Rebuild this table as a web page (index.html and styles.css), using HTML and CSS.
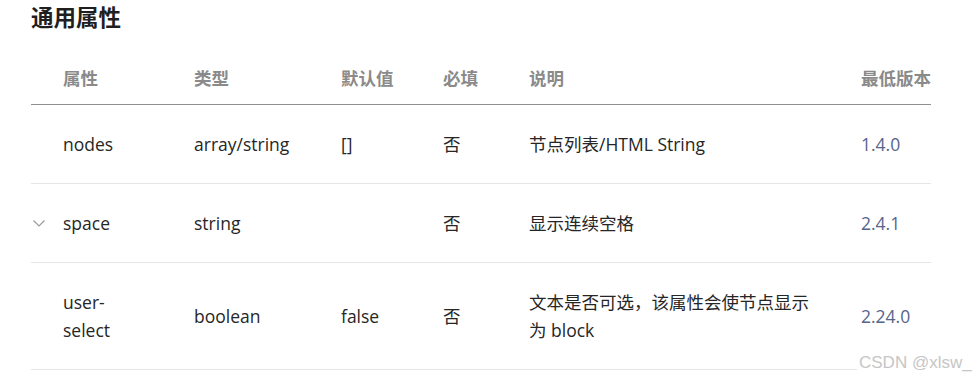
FILE: index.html
```html
<!DOCTYPE html>
<html lang="zh-CN">
<head>
<meta charset="utf-8">
<title>通用属性</title>
<link rel="stylesheet" href="styles.css">
</head>
<body>
<div class="page">
  <h2 class="title">通用属性</h2>
  <table class="props">
    <colgroup>
      <col class="c-name"><col class="c-type"><col class="c-def"><col class="c-req"><col class="c-desc"><col class="c-ver">
    </colgroup>
    <thead>
      <tr>
        <th class="name"><div class="name-cell"><span class="toggle"></span><span>属性</span></div></th>
        <th>类型</th>
        <th>默认值</th>
        <th>必填</th>
        <th class="desc">说明</th>
        <th>最低版本</th>
      </tr>
    </thead>
    <tbody>
      <tr>
        <td class="name"><div class="name-cell"><span class="toggle"></span><span class="name-text">nodes</span></div></td>
        <td>array/string</td>
        <td>[]</td>
        <td>否</td>
        <td class="desc">节点列表/HTML String</td>
        <td class="ver">1.4.0</td>
      </tr>
      <tr>
        <td class="name"><div class="name-cell"><span class="toggle"><svg width="12" height="7" viewBox="0 0 12 7"><path d="M0.5 0.5 L6 6 L11.5 0.5" fill="none" stroke="#9a9a9a" stroke-width="1.2"/></svg></span><span class="name-text">space</span></div></td>
        <td>string</td>
        <td></td>
        <td>否</td>
        <td class="desc">显示连续空格</td>
        <td class="ver">2.4.1</td>
      </tr>
      <tr>
        <td class="name"><div class="name-cell"><span class="toggle"></span><span class="name-text">user-select</span></div></td>
        <td>boolean</td>
        <td>false</td>
        <td>否</td>
        <td class="desc">文本是否可选，该属性会使节点显示为 block</td>
        <td class="ver">2.24.0</td>
      </tr>
    </tbody>
  </table>
  <div class="watermark">CSDN @xlsw_</div>
</div>
</body>
</html>
```
FILE: styles.css
```css
html, body {
  margin: 0;
  padding: 0;
  background: #ffffff;
}
body {
  font-family: "Open Sans", "Noto Sans CJK SC", sans-serif;
  color: #262626;
}
.page {
  position: relative;
  width: 978px;
  height: 382px;
  overflow: hidden;
}
.title {
  margin: 0;
  padding: 0 0 0 31px;
  font-family: "Noto Sans CJK SC", sans-serif;
  font-size: 22.5px;
  font-weight: 700;
  line-height: 32px;
  color: #1f1f1f;
}
.props {
  margin: 32px 0 0 31px;
  width: 900px;
  table-layout: fixed;
  border-collapse: collapse;
  font-size: 17.5px;
  line-height: 28px;
}
.c-name { width: 163px; }
.c-type { width: 147px; }
.c-def { width: 102px; }
.c-req { width: 86px; }
.c-desc { width: 332px; }
.c-ver { width: 70px; }
.props th {
  text-align: left;
  font-family: "Noto Sans CJK SC", sans-serif;
  font-weight: 700;
  color: #8a8a8a;
  padding: 0 0 12px 0;
  border-bottom: 1px solid #8f8f8f;
  white-space: nowrap;
}
.props td {
  padding: 25px 0;
  vertical-align: middle;
  border-bottom: 1px solid #e6e6e6;
}
.props .name {
  padding-right: 50px;
}
.props .desc {
  padding-right: 40px;
}
.name-cell {
  display: flex;
  align-items: center;
}
.toggle {
  flex: none;
  width: 30px;
  padding-left: 2px;
  display: flex;
  align-items: center;
}
.toggle svg {
  display: block;
}
.name-text {
  min-width: 0;
}
.ver {
  color: #56648c;
}
.watermark {
  position: absolute;
  left: 857px;
  top: 353px;
  padding: 0 2px;
  background: #ffffff;
  font-family: "Liberation Sans", Arial, sans-serif;
  font-size: 17px;
  line-height: 20px;
  color: #c6c6c6;
}
```
